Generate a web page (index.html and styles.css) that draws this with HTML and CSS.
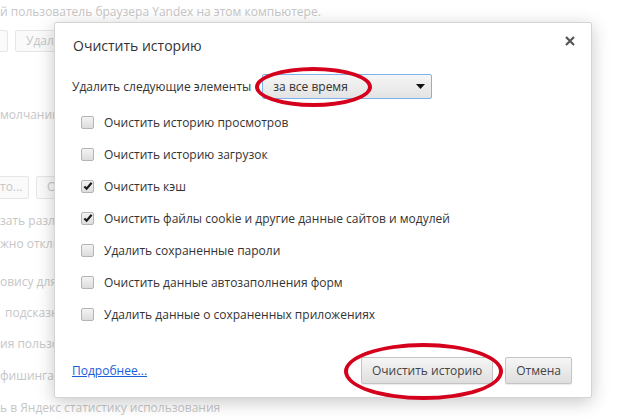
FILE: index.html
```html
<!DOCTYPE html>
<html lang="ru">
<head>
    <meta charset="UTF-8">
    <title>Очистить историю</title>
    <link rel="stylesheet" href="styles.css">
</head>
<body>

    <!-- страница настроек под диалогом -->
    <div class="page">
        <div class="bg-line first">й пользователь браузера Yandex на этом компьютере.</div>
        <div class="bg-buttons top-buttons">
            <span class="bg-btn cut">&nbsp;</span>
            <span class="bg-btn">Удалить</span>
        </div>
        <div class="bg-line molch">молчанию</div>
        <div class="bg-buttons mid-buttons">
            <span class="bg-btn cut">то...</span>
            <span class="bg-btn">Очистить</span>
        </div>
        <div class="bg-line l1">зать различные</div>
        <div class="bg-line l2">жно отключить</div>
        <div class="bg-line l3">овису для</div>
        <div class="bg-line l4 shift">подсказки</div>
        <div class="bg-line l5">ия пользователя</div>
        <div class="bg-line l6">фишинга</div>
        <div class="bg-line l7">ь в Яндекс статистику использования</div>
    </div>

    <!-- диалог -->
    <div class="dialog">
        <div class="dialog-header">
            <h1>Очистить историю</h1>
            <span class="close">
                <svg width="10" height="10" viewBox="0 0 10 10"><path d="M1 1L9 9M9 1L1 9" stroke="#555" stroke-width="2.2"/></svg>
            </span>
        </div>

        <div class="period-row">
            <span>Удалить следующие элементы</span>
            <div class="select">
                <span>за все время</span>
                <svg width="9" height="5" viewBox="0 0 9 5"><path d="M0 0H9L4.5 5Z" fill="#111"/></svg>
            </div>
        </div>

        <div class="options">
            <div class="option"><span class="box"></span>Очистить историю просмотров</div>
            <div class="option"><span class="box"></span>Очистить историю загрузок</div>
            <div class="option"><span class="box checked"><svg width="11" height="10" viewBox="0 0 11 10"><path d="M1.5 5.5L4 8L9.5 1.5" stroke="#1a1a1a" stroke-width="2.4" fill="none"/></svg></span>Очистить кэш</div>
            <div class="option"><span class="box checked"><svg width="11" height="10" viewBox="0 0 11 10"><path d="M1.5 5.5L4 8L9.5 1.5" stroke="#1a1a1a" stroke-width="2.4" fill="none"/></svg></span>Очистить файлы cookie и другие данные сайтов и модулей</div>
            <div class="option"><span class="box"></span>Удалить сохраненные пароли</div>
            <div class="option"><span class="box"></span>Очистить данные автозаполнения форм</div>
            <div class="option"><span class="box"></span>Удалить данные о сохраненных приложениях</div>
        </div>

        <div class="dialog-footer">
            <a href="#">Подробнее...</a>
            <div class="buttons">
                <button class="btn">Очистить историю</button>
                <button class="btn">Отмена</button>
            </div>
        </div>
    </div>

    <!-- красные пометки -->
    <div class="mark mark-select"></div>
    <div class="mark mark-button"></div>

</body>
</html>
```

FILE: styles.css
```css
body, html {
    margin: 0;
    padding: 0;
    font-family: "Open Sans", "Noto Sans", sans-serif;
    background-color: #fff;
    overflow: hidden;
}

body {
    width: 640px;
    height: 420px;
    position: relative;
}

/* фон страницы */
.page {
    display: flex;
    flex-direction: column;
    color: #c6c6c6;
    font-size: 12px;
}

.bg-line {
    height: 22px;
    line-height: 22px;
    white-space: nowrap;
}

.bg-line.first {
    height: 24px;
    line-height: 24px;
}

.bg-buttons {
    display: flex;
    gap: 7px;
    height: 22px;
}

.top-buttons { margin-top: 6px; }
.mid-buttons { margin-top: 50px; height: 23px; }

.bg-btn {
    border: 1px solid #e6e6e6;
    border-radius: 2px;
    background-color: #fafafa;
    width: 80px;
    padding-left: 10px;
    line-height: 20px;
    box-sizing: border-box;
}

.top-buttons .cut { width: 28px; margin-left: -20px; }
.mid-buttons .cut { width: 49px; margin-left: -20px; padding-left: 19px; }

.molch { margin-top: 52px; }
.l1 { margin-top: 11px; }
.l2 { margin-top: 1px; }
.l3 { margin-top: 16px; }
.l4 { margin-top: 9px; }
.l5 { margin-top: 9px; }
.l6 { margin-top: 10px; }
.l7 { margin-top: 10px; }
.shift { padding-left: 5px; }

/* диалог */
.dialog {
    position: absolute;
    left: 54px;
    top: 22px;
    width: 538px;
    height: 376px;
    box-sizing: border-box;
    background-color: #fff;
    border: 1px solid #d4d4d4;
    border-radius: 2px;
    box-shadow: 0 4px 18px rgba(0, 0, 0, 0.22);
    padding: 0 19px 13px 17px;
    display: flex;
    flex-direction: column;
    color: #333;
    font-size: 12px;
}

.dialog-header {
    display: flex;
    justify-content: space-between;
    height: 45px;
}

.dialog-header h1 {
    margin: 0;
    padding-left: 1px;
    font-size: 14px;
    font-weight: normal;
    line-height: 46px;
    color: #333;
}

.close {
    margin-top: 10px;
    margin-right: -3px;
}

.period-row {
    display: flex;
    align-items: center;
    gap: 11px;
    margin-top: 6px;
    height: 25px;
}

.select {
    width: 170px;
    height: 25px;
    box-sizing: border-box;
    border: 1px solid #7fb2ec;
    border-radius: 2px;
    background: linear-gradient(#f6f6f6, #e3e3e3);
    display: flex;
    align-items: center;
    justify-content: space-between;
    padding: 0 6px 0 10px;
}

.options {
    margin-top: 7px;
    padding-left: 9px;
}

.option {
    display: flex;
    align-items: center;
    height: 32px;
}

/* чекбоксы */
.box {
    width: 13px;
    height: 13px;
    box-sizing: border-box;
    border: 1px solid #b4b4b4;
    border-radius: 2px;
    background: linear-gradient(#f4f4f4, #dcdcdc);
    margin-right: 10px;
    display: flex;
    align-items: center;
    justify-content: center;
}

.box svg {
    margin-left: 1px;
}

.dialog-footer {
    margin-top: auto;
    display: flex;
    align-items: center;
    justify-content: space-between;
}

.dialog-footer a {
    color: #1a5fd6;
    text-decoration: underline;
}

.buttons {
    display: flex;
    gap: 12px;
}

/* кнопки */
.btn {
    font-family: inherit;
    font-size: 12px;
    color: #444;
    height: 27px;
    padding: 0 10px;
    border: 1px solid #c4c4c4;
    border-radius: 2px;
    background: linear-gradient(#f6f6f6, #dedede);
    box-shadow: 0 1px 1px rgba(0, 0, 0, 0.08);
}

/* красные эллипсы */
.mark {
    position: absolute;
    border: 4px solid #d4001c;
    border-radius: 50%;
    box-sizing: border-box;
}

.mark-select {
    left: 255px;
    top: 67px;
    width: 117px;
    height: 40px;
}

.mark-button {
    left: 344px;
    top: 343px;
    width: 159px;
    height: 57px;
}
```
